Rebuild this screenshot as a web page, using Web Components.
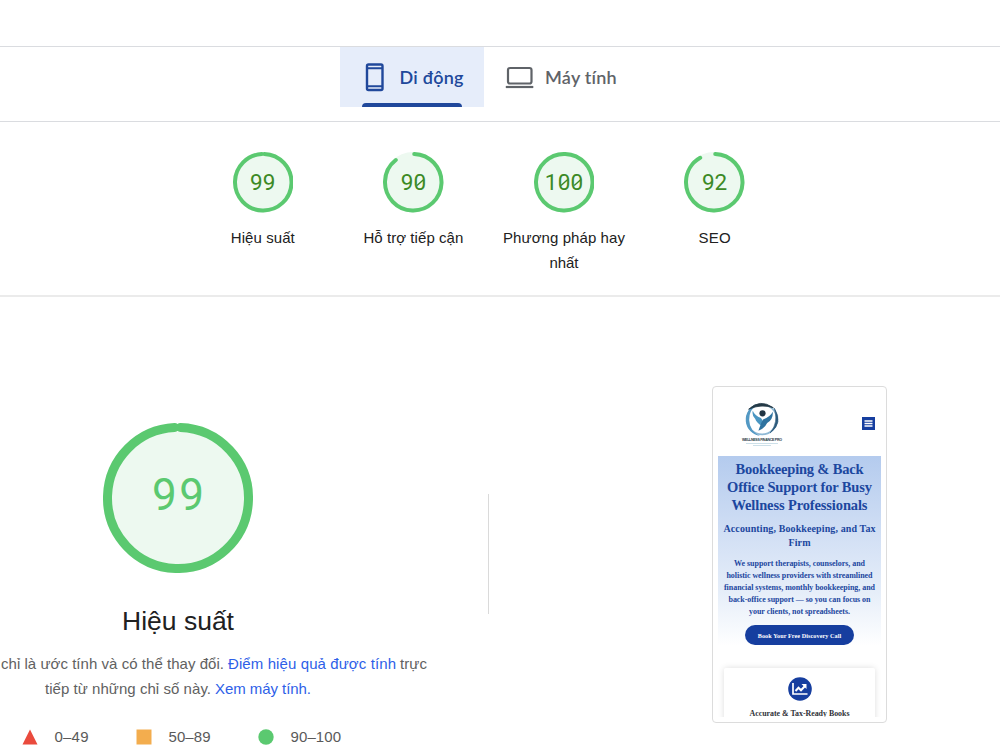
<!DOCTYPE html>
<html lang="vi">
<head>
<meta charset="utf-8">
<title>PageSpeed Insights</title>
<style>
  body {
    margin: 0;
    width: 1000px;
    height: 750px;
    overflow: hidden;
    background: #fff;
    color: #212121;
    font-family: "Liberation Sans", Arial, sans-serif;
  }
</style>
</head>
<body>
<report-page></report-page>

<script>
// One line of text, tracked out or in to an exact width.
class FitLine extends HTMLElement {
  constructor() {
    super();
    this.attachShadow({ mode: "open" });
  }

  connectedCallback() {
    this.shadowRoot.innerHTML = /* html */`
    <style>
      :host { display: block; flex: none; width: max-content; white-space: nowrap; }
      span { display: block; width: max-content; }
    </style>
    <span>${this.getAttribute("text")}</span>
    `;
    const span = this.shadowRoot.querySelector("span");
    const width = Number(this.getAttribute("width"));
    const gaps = span.textContent.length - 1;
    if (!width || !gaps) return;
    const tracking = (width - span.getBoundingClientRect().width) / gaps;
    span.style.letterSpacing = `${tracking}px`;
    span.style.marginRight = `${-tracking}px`;
  }
}

customElements.define("fit-line", FitLine);

class DeviceTab extends HTMLElement {
  constructor() {
    super();
    this.attachShadow({ mode: "open" });
  }

  static get styles() {
    return /* css */`
      :host {
        display: flex;
        flex-direction: column;
        justify-content: space-between;
        box-sizing: border-box;
        height: 60px;
        width: 144.5px;
        color: #5f6368;
        font: 600 18px/24px Lato, sans-serif;
      }
      :host([active]) { background: #e6edfa; color: #20489b; }
      .row { display: flex; align-items: center; padding: 15px 0 0 21px; gap: 11px; height: 30px; }
      .bar { width: 100px; height: 4px; margin-left: 22.5px; border-radius: 4px 4px 0 0; }
      :host([active]) .bar { background: #20489b; }
      ::slotted(svg) { flex: none; }
    `;
  }

  connectedCallback() {
    this.shadowRoot.innerHTML = /* html */`
    <style>${DeviceTab.styles}</style>
    <div class="row">
      <slot></slot>
      <fit-line text="${this.getAttribute("label")}" width="${this.getAttribute("text-width")}"></fit-line>
    </div>
    <div class="bar"></div>
    `;
  }
}

customElements.define("device-tab", DeviceTab);

class ScoreRing extends HTMLElement {
  constructor() {
    super();
    this.attachShadow({ mode: "open" });
  }

  static get styles() {
    return /* css */`
      :host {
        --size: 60px;
        --ink: #3c8a26;
        --lift: 0px;
        display: grid;
        flex: none;
        place-items: center;
        width: var(--size);
        height: var(--size);
        font: 400 22.5px/1 Roboto, sans-serif;
        color: var(--ink);
      }
      .ring, .score { grid-area: 1 / 1; }
      .ring { width: 100%; height: 100%; }
      .score { position: relative; margin-bottom: var(--lift); }
      .slashes { position: absolute; left: 0; top: 0; }
    `;
  }

  connectedCallback() {
    const score = this.getAttribute("score");
    const stroke = Number(this.getAttribute("stroke"));
    const size = Number(this.getAttribute("size"));
    const pitch = Number(this.getAttribute("pitch"));
    const r = (size - stroke) / 2;
    const length = 2 * Math.PI * r;
    const arc = Number(this.getAttribute("arc")) * length;
    const c = size / 2;
    // Strike every zero, as in a coding typeface.
    const slashes = [...score].map((d, i) => d === "0"
      ? `<path d="M${i * pitch + 2.8} 14.5l6.8-6" stroke="currentColor" stroke-width="1.5"/>` : "").join("");
    this.shadowRoot.innerHTML = /* html */`
    <style>
      ${ScoreRing.styles}
      :host { --size: ${size}px; }
    </style>
    <svg class="ring" viewBox="0 0 ${size} ${size}" fill="none">
      <circle cx="${c}" cy="${c}" r="${c}" fill="#edf9f0"/>
      <circle cx="${c}" cy="${c}" r="${r}" stroke="#5bc970" stroke-width="${stroke}"
        stroke-linecap="round" stroke-dasharray="${arc} ${length}" transform="rotate(-88 ${c} ${c})"/>
    </svg>
    <div class="score">
      <fit-line text="${score}" width="${score.length * pitch - 1}"></fit-line>
      <svg class="slashes" width="${score.length * pitch}" height="23" fill="none">${slashes}</svg>
    </div>
    `;
  }
}

customElements.define("score-ring", ScoreRing);

class CategoryScore extends HTMLElement {
  constructor() {
    super();
    this.attachShadow({ mode: "open" });
  }

  connectedCallback() {
    const lines = this.getAttribute("lines").split("|").map((l) => {
      const [text, width] = l.split(":");
      return `<fit-line text="${text}" width="${width}"></fit-line>`;
    }).join("");
    this.shadowRoot.innerHTML = /* html */`
    <style>
      :host { display: flex; flex-direction: column; align-items: center; width: 150.6px; font-size: 15px; line-height: 25px; }
      .label { display: flex; flex-direction: column; align-items: center; margin-top: 12.5px; }
    </style>
    <score-ring score="${this.getAttribute("score")}" size="60.5" stroke="4" pitch="13.2" arc="${this.getAttribute("arc")}"></score-ring>
    <div class="label">${lines}</div>
    `;
  }
}

customElements.define("category-score", CategoryScore);

class ScoreLegend extends HTMLElement {
  constructor() {
    super();
    this.attachShadow({ mode: "open" });
  }

  connectedCallback() {
    this.shadowRoot.innerHTML = /* html */`
    <style>
      :host { display: flex; gap: 47px; font-size: 15px; line-height: 24px; color: #5a5a5a; }
      div { display: flex; align-items: center; gap: 17px; }
      svg { width: 16px; height: 16px; flex: none; }
    </style>
    <div><svg><path d="M8 .5 15.5 15.5H.5z" fill="#ea4a3d"/></svg><fit-line text="0–49" width="34"></fit-line></div>
    <div><svg><path d="M.5.5h15v15H.5z" fill="#f3ad4e"/></svg><fit-line text="50–89" width="42"></fit-line></div>
    <div><svg><circle cx="8" cy="8" r="7.7" fill="#5bc970"/></svg><fit-line text="90–100" width="50.5"></fit-line></div>
    `;
  }
}

customElements.define("score-legend", ScoreLegend);

class PhonePreview extends HTMLElement {
  constructor() {
    super();
    this.attachShadow({ mode: "open" });
  }

  static get styles() {
    return /* css */`
      :host {
        display: flex;
        flex-direction: column;
        box-sizing: border-box;
        width: 175px;
        height: 337px;
        padding: 5px;
        border: 1px solid #dcdcdc;
        border-radius: 4px;
        font-family: "Liberation Serif", "Times New Roman", serif;
        font-weight: bold;
        color: #1c479f;
      }
      svg { flex: none; }
      .screen { flex: 1; display: flex; flex-direction: column; overflow: hidden; }
      header { display: flex; justify-content: space-between; height: 63.5px; flex: none; }
      .brand { display: flex; flex-direction: column; align-items: center; margin: 9px 0 0 22px; width: 44px; }
      .brand fit-line { font: bold 3.6px/5px "Liberation Sans", sans-serif; color: #2b3d4a; }
      .menu { margin: 25px 6px 0 0; }
      .hero {
        display: flex; flex-direction: column; align-items: center; flex: none;
        height: 190px; box-sizing: border-box; padding-top: 4.5px;
        background: linear-gradient(#b4cbee, #d4e1f5 45%, #e6eef9 72%, #fff);
      }
      h1, h2, p { display: flex; flex-direction: column; align-items: center; margin: 0; }
      h1 { font-size: 14.5px; line-height: 18.2px; }
      h2 { font-size: 10px; line-height: 14px; margin-top: 7.5px; }
      p { font-size: 8px; line-height: 12px; margin-top: 7.5px; }
      .cta {
        display: grid; place-items: center; width: 109px; height: 20px; flex: none;
        margin-top: 7.5px; border-radius: 10px; background: #163e9f; color: #fff; font-size: 6.2px;
      }
      .card {
        display: flex; flex-direction: column; align-items: center; flex: none;
        margin: 22.5px 6px 0; height: 70px; padding-top: 8.5px; box-sizing: border-box;
        box-shadow: 0 0 6px #0002; border-radius: 2px; color: #303238; font-size: 7.9px; line-height: 10px;
      }
      .card fit-line { margin-top: 8px; }
    `;
  }

  connectedCallback() {
    this.shadowRoot.innerHTML = /* html */`
    <style>${PhonePreview.styles}</style>
    <div class="screen">
      <header>
        <div class="brand">
          <svg width="38" height="37" viewBox="1 .5 36 36" fill="none">
            <circle cx="19" cy="18.5" r="14.5" stroke="#8fb9d5" stroke-width="1.8"/>
            <path d="M14 3.5A16 16 0 0 0 17 34.5Q7 30 6.500 19 6.500 9 14 3.500" fill="#5399c4"/>
            <path d="M6 8.500Q17-2 30 7 18 3 6 8.500" fill="#243946" stroke="#243946" stroke-width=".8"/>
            <path d="M31 7.5Q40 22 27 31.5 35.500 21 31 7.500" fill="#2d5a7b" stroke="#2d5a7b" stroke-width=".6"/>
            <circle cx="19.5" cy="12.5" r="3" fill="#223544"/>
            <path d="M10 10Q12 15 18 17 21 20 19 25 13 21 12.500 18 9 15 10 10" fill="#4a96c2"/>
            <path d="M29.500 11Q30 18.500 24 22 22 27 15.500 29.500 18 22 20 18.500 27 16 29.500 11" fill="#2f73a0"/>
          </svg>
          <fit-line text="WELLNESS FINANCE PRO" width="40"></fit-line>
          <svg width="32" height="4"><path d="M0 .5h32M7 2.5h18" stroke="#b8d2df" stroke-width=".7"/></svg>
        </div>
        <svg class="menu" width="13" height="13"><path d="M0 0h13v13H0z" fill="#163e9f"/><path d="M2.500 4h8M2.500 6.500h8M2.500 9h8" stroke="#fff" stroke-width="1.3"/></svg>
      </header>
      <section class="hero">
        <h1>
          <fit-line text="Bookkeeping &amp; Back" width="128"></fit-line>
          <fit-line text="Office Support for Busy" width="145"></fit-line>
          <fit-line text="Wellness Professionals" width="136"></fit-line>
        </h1>
        <h2>
          <fit-line text="Accounting, Bookkeeping, and Tax" width="152"></fit-line>
          <fit-line text="Firm" width="22"></fit-line>
        </h2>
        <p>
          <fit-line text="We support therapists, counselors, and" width="131"></fit-line>
          <fit-line text="holistic wellness providers with streamlined" width="146"></fit-line>
          <fit-line text="financial systems, monthly bookkeeping, and" width="151"></fit-line>
          <fit-line text="back-office support — so you can focus on" width="142"></fit-line>
          <fit-line text="your clients, not spreadsheets." width="101"></fit-line>
        </p>
        <div class="cta"><fit-line text="Book Your Free Discovery Call" width="83.5"></fit-line></div>
      </section>
      <section class="card">
        <svg width="24" height="24" viewBox="0 0 24 24" fill="none" stroke="#fff">
          <circle cx="12" cy="12" r="11.8" fill="#163e9f" stroke="none"/>
          <path d="M5 6v11h14.500" stroke-width="1.7"/>
          <path d="m7.500 14 3-3.200 2.500 2.500 4-4.300" stroke-width="2"/>
          <path d="M13.5 7H18.5V12z" fill="#fff" stroke="none"/>
        </svg>
        <fit-line text="Accurate &amp; Tax-Ready Books" width="100"></fit-line>
      </section>
    </div>
    `;
  }
}

customElements.define("phone-preview", PhonePreview);

class ReportPage extends HTMLElement {
  constructor() {
    super();
    this.attachShadow({ mode: "open" });
  }

  static get styles() {
    return /* css */`
      :host { display: flex; flex-direction: column; height: 750px; overflow: hidden; }
      .top { height: 46px; flex: none; }
      nav {
        display: flex; flex: none; box-sizing: border-box; height: 76px; padding-left: 339.5px;
        border-top: 1px solid #dadce0; border-bottom: 1px solid #dadce0;
      }
      .scores {
        display: flex; flex: none; box-sizing: border-box; height: 175px;
        padding: 30px 0 0 187.5px; border-bottom: 2px solid #ebebeb;
      }
      main { display: flex; flex: 1; min-height: 0; }
      .performance { display: flex; flex-direction: column; align-items: center; width: 356px; flex: none; padding-top: 125.5px; }
      h2 { margin: 30.5px 0 0; font-size: 26.5px; font-weight: 400; line-height: 36px; }
      .text { display: flex; flex-direction: column; align-items: center; width: 100%; margin-top: 12px; font-size: 15px; line-height: 25px; color: #616161; }
      .text div { display: flex; gap: 4px; }
      .text .first { align-self: flex-start; margin-left: 1px; }
      a { color: #2e5fe8; }
      score-legend { align-self: flex-start; margin: 24px 0 0 21.5px; }
      hr { width: 1px; height: 120px; margin: 197px 0 0 132px; border: 0; background: #dadada; flex: none; }
      phone-preview { margin: 89px 0 0 223px; flex: none; }
    `;
  }

  connectedCallback() {
    this.shadowRoot.innerHTML = /* html */`
    <style>${ReportPage.styles}</style>
    <div class="top"></div>
    <nav>
      <device-tab active label="Di động" text-width="64">
        <svg width="28" height="30" viewBox="0 0 28 30" fill="none" stroke="#20489b" stroke-width="2.4">
          <rect x="6" y="2.5" width="15.5" height="25.500" rx="1.5"/><path d="M6 6.300h15.500M6 24.200h15.500" stroke-width="2"/>
        </svg>
      </device-tab>
      <device-tab label="Máy tính" text-width="72">
        <svg width="29" height="30" viewBox="0 0 29 30" fill="none" stroke="#5f6368" stroke-width="2.200">
          <rect x="3" y="6" width="23.500" height="15.500" rx="2"/><path d="M.8 25h27.500"/>
        </svg>
      </device-tab>
    </nav>
    <section class="scores">
      <category-score score="99" arc=".985" lines="Hiệu suất:64"></category-score>
      <category-score score="90" arc=".887" lines="Hỗ trợ tiếp cận:100"></category-score>
      <category-score score="100" arc="1" lines="Phương pháp hay:122|nhất:29"></category-score>
      <category-score score="92" arc=".91" lines="SEO:32"></category-score>
    </section>
    <main>
      <section class="performance">
        <score-ring style="--ink: #5bc970; --lift: 6px; font-size: 44px" score="99" size="150" stroke="9" pitch="26.5" arc=".985"></score-ring>
        <h2><fit-line text="Hiệu suất" width="112"></fit-line></h2>
        <div class="text">
          <div class="first">
            <fit-line text="chỉ là ước tính và có thể thay đổi." width="223"></fit-line>
            <a><fit-line text="Điểm hiệu quả được tính" width="168"></fit-line></a>
            <fit-line text="trực" width="27"></fit-line>
          </div>
          <div>
            <fit-line text="tiếp từ những chỉ số này." width="166"></fit-line>
            <a><fit-line text="Xem máy tính." width="96"></fit-line></a>
          </div>
        </div>
        <score-legend></score-legend>
      </section>
      <hr>
      <phone-preview></phone-preview>
    </main>
    `;
  }
}

customElements.define("report-page", ReportPage);
</script>
</body>
</html>
